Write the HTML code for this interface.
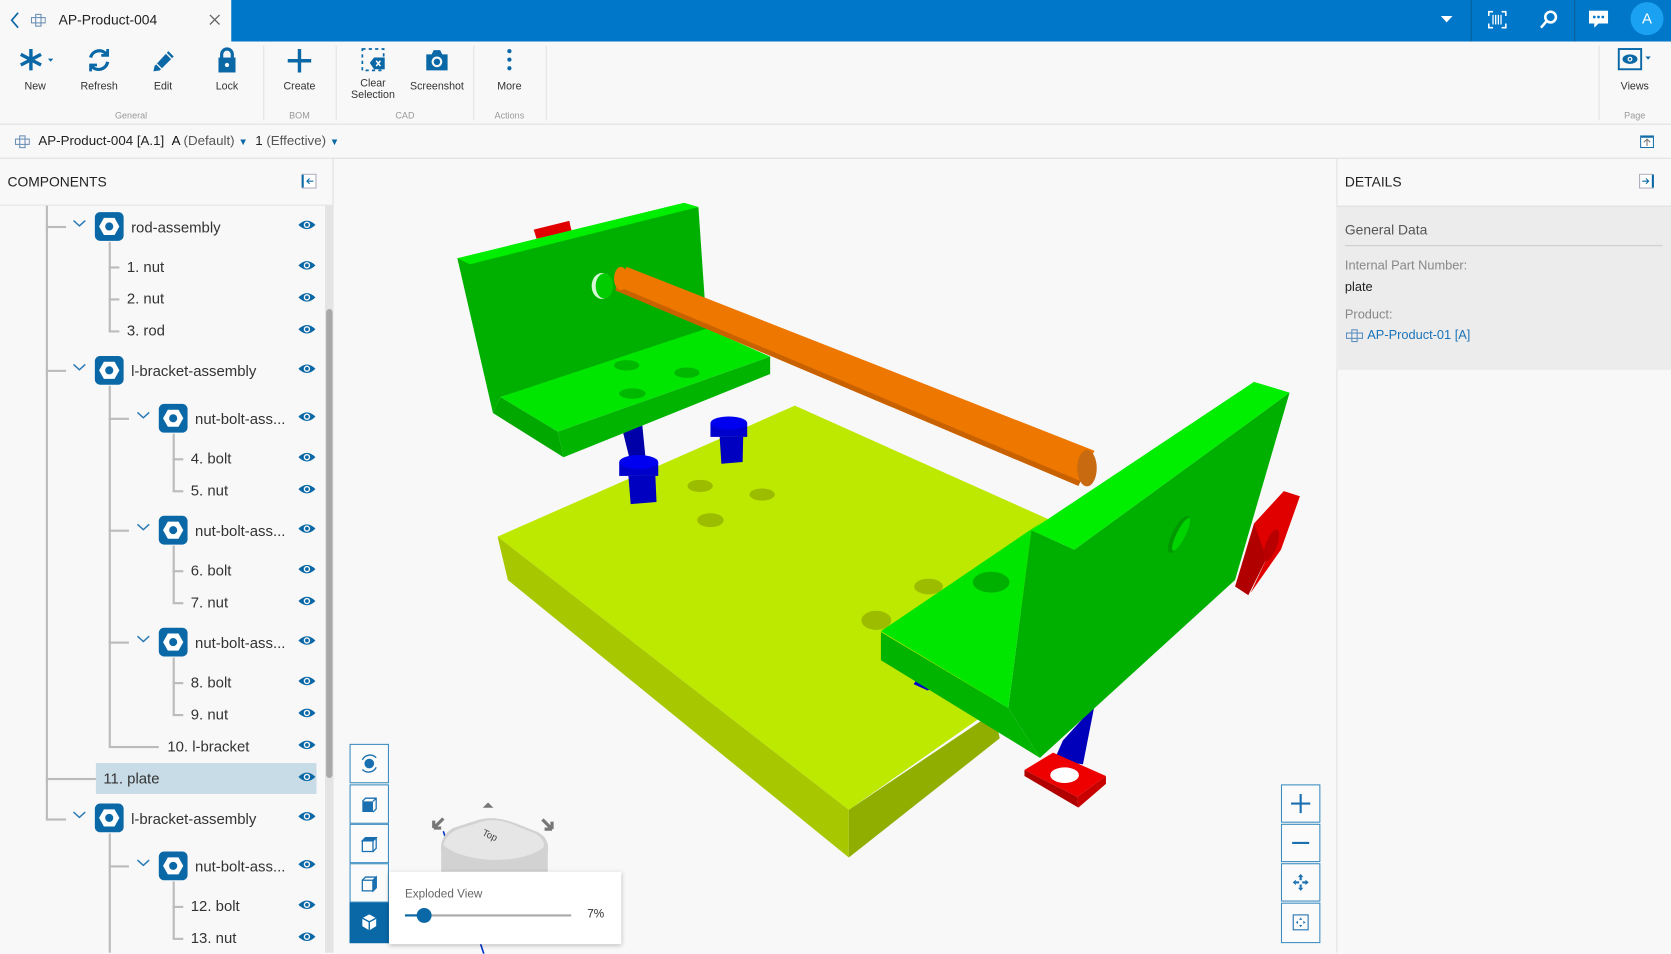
<!DOCTYPE html>
<html><head><meta charset="utf-8">
<style>
*{box-sizing:border-box;margin:0;padding:0}
html,body{width:1671px;height:952px;overflow:hidden;background:#f8f8f8;font-family:"Liberation Sans",sans-serif;color:#333}
#w{position:absolute;left:0;top:0;width:1568px;height:894px;transform:scale(1.06569);transform-origin:0 0;background:#f8f8f8}
.a{position:absolute}
.hdr{left:0;top:0;width:1568px;height:39px;background:#0077c8}
.tab{left:0;top:0;width:217px;height:39px;background:#f8f8f8}
.tb{top:39px;left:0;width:1568px;height:78px;background:#f8f8f8;border-bottom:1px solid #ddd}
.btn{position:absolute;top:44px;width:60px;text-align:center;font-size:10px;color:#333}
.btn svg{display:block;margin:0 auto 6px auto}
.grp{position:absolute;top:103px;font-size:8.5px;color:#999;text-align:center}
.sep{position:absolute;top:43px;width:1px;height:70px;background:#e2e2e2}
.row{position:absolute;font-size:14px;color:#333;white-space:nowrap}
.ln{position:absolute;background:#bbb}
.vb{position:absolute;left:328px;width:37px;height:37px;border:1px solid #3a8cc0;background:#fbfbfb}
.zb{position:absolute;left:1202px;width:37px;height:36px;border:1px solid #3a8cc0;background:#fbfbfb}
</style></head><body><div id="w">
<div class="a hdr"></div>
<div class="a tab"></div>
<svg class="a" style="left:8px;top:11px" width="12" height="16"><path d="M9 1 L3 8 L9 15" stroke="#0a68a6" stroke-width="1.6" fill="none"/></svg>
<svg class="a" style="left:29px;top:12px" width="14" height="14" fill="none" stroke="#6a8fb5" stroke-width="1"><rect x="4.5" y="1.5" width="5" height="11"/><rect x="0.5" y="4.5" width="13" height="5"/></svg>
<div class="a" style="left:55px;top:11px;font-size:13px;color:#222">AP-Product-004</div>
<svg class="a" style="left:196px;top:13px" width="11" height="11"><path d="M1 1L10 10M10 1L1 10" stroke="#666" stroke-width="1.2"/></svg>
<svg class="a" style="left:1352px;top:15px" width="11" height="7"><path d="M0 0H11L5.5 6Z" fill="#fff"/></svg>
<div class="a" style="left:1380px;top:0;width:1px;height:39px;background:#0a5f9c"></div>
<div class="a" style="left:1477px;top:0;width:1px;height:39px;background:#0a5f9c"></div>
<svg class="a" style="left:1396px;top:10px" width="18" height="17" fill="none" stroke="#fff" stroke-width="1.5"><path d="M1 5V1H5M13 1H17V5M17 12V16H13M5 16H1V12"/><path d="M5 4V13M7.5 4V13M10 4V13M12.5 4V13" stroke-width="1.2"/></svg>
<svg class="a" style="left:1444px;top:9px" width="18" height="19" fill="none" stroke="#fff" stroke-width="2.4"><circle cx="11" cy="7" r="5"/><path d="M7.5 10.5L2 17"/></svg>
<svg class="a" style="left:1491px;top:10px" width="18" height="17"><path d="M0 0H18V12H9L5 16V12H0Z" fill="#fff"/><circle cx="5" cy="6" r="1.3" fill="#0077c8"/><circle cx="9" cy="6" r="1.3" fill="#0077c8"/><circle cx="13" cy="6" r="1.3" fill="#0077c8"/></svg>
<div class="a" style="left:1530px;top:2px;width:31px;height:31px;border-radius:50%;background:#1ba1f2;color:#fff;font-size:14px;text-align:center;line-height:31px">A</div>
<div class="a tb"></div>
<div class="btn" style="left:3px"><svg width="34" height="26"><g stroke="#0a68a6" stroke-width="3.2"><path d="M13 2V22M3.5 7L22.5 17M22.5 7L3.5 17"/></g><path d="M29 11H34L31.5 14Z" fill="#0a68a6"/></svg>New</div>
<div class="btn" style="left:63px"><svg width="24" height="26" fill="none" stroke="#0a68a6" stroke-width="3"><path d="M4 10A8.5 8.5 0 0 1 19 7"/><path d="M20 14A8.5 8.5 0 0 1 5 18"/><path d="M20 2V8H14" stroke-width="2.6"/><path d="M4 23V17H10" stroke-width="2.6"/></svg>Refresh</div>
<div class="btn" style="left:123px"><svg width="24" height="26"><path d="M4 18L17 4L22 9L9 22L3 23Z" fill="#0a68a6"/><path d="M6 16L11 21M15 6L20 11" stroke="#f8f8f8" stroke-width="1.3"/></svg>Edit</div>
<div class="btn" style="left:183px"><svg width="22" height="26"><path d="M6 11V7A5 5 0 0 1 16 7V11" stroke="#0a68a6" stroke-width="3" fill="none"/><rect x="3" y="10" width="16" height="14" fill="#0a68a6"/><circle cx="11" cy="17" r="2" fill="#f8f8f8"/></svg>Lock</div>
<div class="sep" style="left:247px"></div>
<div class="btn" style="left:251px"><svg width="26" height="26"><path d="M13 2V24M2 13H24" stroke="#0a68a6" stroke-width="3.2"/></svg>Create</div>
<div class="sep" style="left:315px"></div>
<div class="btn" style="left:320px;line-height:11px"><svg width="24" height="26" style="margin-bottom:3px"><path d="M2 2H22V22H2Z" stroke="#0a68a6" stroke-width="1.6" stroke-dasharray="3 3" fill="none"/><path d="M9 15L13 10H23V21H13Z" fill="#0a68a6"/><path d="M15 13L19 18M19 13L15 18" stroke="#fff" stroke-width="1.4"/></svg>Clear<br>Selection</div>
<div class="btn" style="left:380px"><svg width="24" height="26"><path d="M2 7H7L9 3H15L17 7H22V22H2Z" fill="#0a68a6"/><circle cx="12" cy="14" r="5" fill="#f8f8f8"/><circle cx="12" cy="14" r="3" fill="#0a68a6"/></svg>Screenshot</div>
<div class="sep" style="left:444px"></div>
<div class="btn" style="left:448px"><svg width="10" height="26"><circle cx="5" cy="4" r="2" fill="#0a68a6"/><circle cx="5" cy="12" r="2" fill="#0a68a6"/><circle cx="5" cy="20" r="2" fill="#0a68a6"/></svg>More</div>
<div class="sep" style="left:512px"></div>
<div class="grp" style="left:93px;width:60px">General</div>
<div class="grp" style="left:261px;width:40px">BOM</div>
<div class="grp" style="left:360px;width:40px">CAD</div>
<div class="grp" style="left:458px;width:40px">Actions</div>
<div class="sep" style="left:1500px"></div>
<div class="btn" style="left:1504px"><svg width="34" height="26"><rect x="2" y="2" width="21" height="19" fill="#f8f8f8" stroke="#0a68a6" stroke-width="1.8"/><ellipse cx="12.5" cy="11.5" rx="7" ry="4.5" fill="#0a68a6"/><circle cx="12.5" cy="11.5" r="2.3" fill="#f8f8f8"/><circle cx="12.5" cy="11.5" r="1.1" fill="#0a68a6"/><path d="M27 9H32L29.5 12Z" fill="#0a68a6"/></svg>Views</div>
<div class="grp" style="left:1514px;width:40px">Page</div>
<div class="a" style="left:0;top:117px;width:1568px;height:32px;background:#f8f8f8;border-bottom:1px solid #ddd"></div>
<svg class="a" style="left:14px;top:126px" width="14" height="14" fill="none" stroke="#6a8fb5" stroke-width="1"><rect x="4.5" y="1.5" width="5" height="11"/><rect x="0.5" y="4.5" width="13" height="5"/></svg>
<div class="a" style="left:36px;top:125px;font-size:12.5px;color:#222;white-space:nowrap">AP-Product-004 [A.1] &nbsp;<b style="font-weight:normal;color:#111">A</b> <span style="color:#555">(Default)</span> <span style="color:#0a68a6;font-size:9px">▼</span> &nbsp;1 <span style="color:#555">(Effective)</span> <span style="color:#0a68a6;font-size:9px">▼</span></div>
<svg class="a" style="left:1539px;top:127px" width="13" height="12"><rect x="0.5" y="0.5" width="12" height="11" fill="#fff" stroke="#0a68a6"/><path d="M6.5 10V4M3.5 6.5L6.5 3.5L9.5 6.5" stroke="#777" fill="none"/><path d="M1 1.5H12" stroke="#0a68a6" stroke-width="1.5"/></svg>
<div class="a" style="left:0;top:149px;width:313px;height:745px;background:#f8f8f8;border-right:1px solid #e0e0e0"></div>
<div class="a" style="left:0;top:192px;width:313px;height:1px;background:#e4e4e4"></div>
<div class="a" style="left:7px;top:163px;font-size:13px;color:#222">COMPONENTS</div>
<svg class="a" style="left:283px;top:163px" width="14" height="14"><rect x="0.5" y="0.5" width="13" height="13" fill="#fff" stroke="#aab"/><path d="M1 1V13" stroke="#0a68a6" stroke-width="2"/><path d="M11 7H5M7.5 4.5L5 7L7.5 9.5" stroke="#0a68a6" fill="none"/></svg>
<div class="a" style="left:305px;top:193px;width:8px;height:701px;background:#e4e4e4"></div>
<div class="a" style="left:306px;top:290px;width:6px;height:440px;background:#a9a9a9;border-radius:3px"></div>
<div class="a" style="left:90px;top:716px;width:207px;height:29px;background:#c8dce7"></div>
<div class="ln" style="left:43px;top:193px;width:1.5px;height:575px"></div>
<div class="ln" style="left:43px;top:212px;width:19px;height:1.5px"></div>
<div class="ln" style="left:43px;top:347px;width:19px;height:1.5px"></div>
<div class="ln" style="left:43px;top:730px;width:47px;height:1.5px"></div>
<div class="ln" style="left:43px;top:768px;width:19px;height:1.5px"></div>
<div class="ln" style="left:102px;top:227px;width:1.5px;height:84px"></div>
<div class="ln" style="left:102px;top:250px;width:10px;height:1.5px"></div>
<div class="ln" style="left:102px;top:280px;width:10px;height:1.5px"></div>
<div class="ln" style="left:102px;top:310px;width:10px;height:1.5px"></div>
<div class="ln" style="left:102px;top:362px;width:1.5px;height:338px"></div>
<div class="ln" style="left:102px;top:392px;width:19px;height:1.5px"></div>
<div class="ln" style="left:102px;top:497px;width:19px;height:1.5px"></div>
<div class="ln" style="left:102px;top:602px;width:19px;height:1.5px"></div>
<div class="ln" style="left:102px;top:700px;width:47px;height:1.5px"></div>
<div class="ln" style="left:102px;top:782px;width:1.5px;height:112px"></div>
<div class="ln" style="left:102px;top:812px;width:19px;height:1.5px"></div>
<div class="ln" style="left:162px;top:407px;width:1.5px;height:54px"></div>
<div class="ln" style="left:162px;top:430px;width:10px;height:1.5px"></div>
<div class="ln" style="left:162px;top:460px;width:10px;height:1.5px"></div>
<div class="ln" style="left:162px;top:512px;width:1.5px;height:54px"></div>
<div class="ln" style="left:162px;top:535px;width:10px;height:1.5px"></div>
<div class="ln" style="left:162px;top:565px;width:10px;height:1.5px"></div>
<div class="ln" style="left:162px;top:617px;width:1.5px;height:54px"></div>
<div class="ln" style="left:162px;top:640px;width:10px;height:1.5px"></div>
<div class="ln" style="left:162px;top:670px;width:10px;height:1.5px"></div>
<div class="ln" style="left:162px;top:827px;width:1.5px;height:54px"></div>
<div class="ln" style="left:162px;top:850px;width:10px;height:1.5px"></div>
<div class="ln" style="left:162px;top:880px;width:10px;height:1.5px"></div>
<svg width="0" height="0" style="position:absolute"><defs>
<g id="hx"><rect width="27" height="27" rx="5" fill="#0a68a6"/><path d="M8.5 5.5H18.5L23 13.5L18.5 21.5H8.5L4 13.5Z" fill="#fff"/><circle cx="13.5" cy="13.5" r="3.8" fill="#0a68a6"/></g>
<g id="ch"><path d="M1 1L6.5 6L12 1" stroke="#2a7ab5" stroke-width="1.4" fill="none"/></g>
<g id="ey"><path d="M0 6Q8 -2 16 6Q8 14 0 6Z" fill="#0a68a6"/><circle cx="8" cy="6" r="3" fill="#f8f8f8"/><circle cx="8" cy="6" r="1.7" fill="#0a68a6"/></g>
</defs></svg>
<svg class="a" style="left:0;top:193px" width="313" height="701">
<g transform="translate(68,13)"><use href="#ch"/></g><g transform="translate(89,6)"><use href="#hx"/></g>
<g transform="translate(68,148)"><use href="#ch"/></g><g transform="translate(89,141)"><use href="#hx"/></g>
<g transform="translate(128,193)"><use href="#ch"/></g><g transform="translate(149,186)"><use href="#hx"/></g>
<g transform="translate(128,298)"><use href="#ch"/></g><g transform="translate(149,291)"><use href="#hx"/></g>
<g transform="translate(128,403)"><use href="#ch"/></g><g transform="translate(149,396)"><use href="#hx"/></g>
<g transform="translate(68,568)"><use href="#ch"/></g><g transform="translate(89,561)"><use href="#hx"/></g>
<g transform="translate(128,613)"><use href="#ch"/></g><g transform="translate(149,606)"><use href="#hx"/></g>
<g transform="translate(280,12)"><use href="#ey"/></g>
<g transform="translate(280,50)"><use href="#ey"/></g>
<g transform="translate(280,80)"><use href="#ey"/></g>
<g transform="translate(280,110)"><use href="#ey"/></g>
<g transform="translate(280,147)"><use href="#ey"/></g>
<g transform="translate(280,192)"><use href="#ey"/></g>
<g transform="translate(280,230)"><use href="#ey"/></g>
<g transform="translate(280,260)"><use href="#ey"/></g>
<g transform="translate(280,297)"><use href="#ey"/></g>
<g transform="translate(280,335)"><use href="#ey"/></g>
<g transform="translate(280,365)"><use href="#ey"/></g>
<g transform="translate(280,402)"><use href="#ey"/></g>
<g transform="translate(280,440)"><use href="#ey"/></g>
<g transform="translate(280,470)"><use href="#ey"/></g>
<g transform="translate(280,500)"><use href="#ey"/></g>
<g transform="translate(280,530)"><use href="#ey"/></g>
<g transform="translate(280,567)"><use href="#ey"/></g>
<g transform="translate(280,612)"><use href="#ey"/></g>
<g transform="translate(280,650)"><use href="#ey"/></g>
<g transform="translate(280,680)"><use href="#ey"/></g>
</svg>
<div class="row" style="left:123px;top:205px">rod-assembly</div>
<div class="row" style="left:119px;top:242px">1. nut</div>
<div class="row" style="left:119px;top:272px">2. nut</div>
<div class="row" style="left:119px;top:302px">3. rod</div>
<div class="row" style="left:123px;top:340px">l-bracket-assembly</div>
<div class="row" style="left:183px;top:385px">nut-bolt-ass...</div>
<div class="row" style="left:179px;top:422px">4. bolt</div>
<div class="row" style="left:179px;top:452px">5. nut</div>
<div class="row" style="left:183px;top:490px">nut-bolt-ass...</div>
<div class="row" style="left:179px;top:527px">6. bolt</div>
<div class="row" style="left:179px;top:557px">7. nut</div>
<div class="row" style="left:183px;top:595px">nut-bolt-ass...</div>
<div class="row" style="left:179px;top:632px">8. bolt</div>
<div class="row" style="left:179px;top:662px">9. nut</div>
<div class="row" style="left:157px;top:692px">10. l-bracket</div>
<div class="row" style="left:97px;top:722px">11. plate</div>
<div class="row" style="left:123px;top:760px">l-bracket-assembly</div>
<div class="row" style="left:183px;top:805px">nut-bolt-ass...</div>
<div class="row" style="left:179px;top:842px">12. bolt</div>
<div class="row" style="left:179px;top:872px">13. nut</div>
<div class="a" style="left:1254px;top:149px;width:314px;height:745px;background:#f8f8f8;border-left:1px solid #e0e0e0"></div>
<div class="a" style="left:1254px;top:193px;width:314px;height:154px;background:#ececec;border-top:1px solid #e0e0e0"></div>
<div class="a" style="left:1262px;top:163px;font-size:13px;color:#222">DETAILS</div>
<svg class="a" style="left:1538px;top:163px" width="14" height="14"><rect x="0.5" y="0.5" width="13" height="13" fill="#fff" stroke="#aab"/><path d="M13 1V13" stroke="#0a68a6" stroke-width="2"/><path d="M3 7H9M6.5 4.5L9 7L6.5 9.5" stroke="#0a68a6" fill="none"/></svg>
<div class="a" style="left:1262px;top:208px;font-size:13px;color:#555">General Data</div>
<div class="a" style="left:1262px;top:230px;width:298px;height:1px;background:#ccc"></div>
<div class="a" style="left:1262px;top:242px;font-size:12px;color:#888">Internal Part Number:</div>
<div class="a" style="left:1262px;top:262px;font-size:12px;color:#222">plate</div>
<div class="a" style="left:1262px;top:288px;font-size:12px;color:#888">Product:</div>
<svg class="a" style="left:1263px;top:308px" width="16" height="14" fill="none" stroke="#5a8fc0" stroke-width="1"><rect x="5.5" y="1.5" width="5" height="11"/><rect x="0.5" y="4.5" width="15" height="5"/></svg>
<div class="a" style="left:1283px;top:307px;font-size:12px;color:#1a73b8">AP-Product-01 [A]</div>
<svg class="a" style="left:412.9px;top:178.3px" width="844.5" height="638.1" viewBox="0 0 1568 1568" preserveAspectRatio="none">
<polygon points="100,800 618,498 1060,760 960,1200 712,1430" fill="#bde800"/>
<polygon points="100,800 712,1430 712,1540 118,900" fill="#a7c700"/>
<polygon points="712,1430 965,1205 975,1265 712,1540" fill="#8fae00"/>
<g fill="#9cbc00"><ellipse cx="453" cy="683" rx="22" ry="14"/><ellipse cx="561" cy="703" rx="22" ry="14"/><ellipse cx="471" cy="762" rx="23" ry="16"/><ellipse cx="851" cy="915" rx="25" ry="18"/><ellipse cx="760" cy="993" rx="26" ry="22"/></g>
<polygon points="315,540 352,540 358,620 330,620" fill="#0000a8"/>
<rect x="312" y="628" width="68" height="32" fill="#0000cc"/><ellipse cx="346" cy="628" rx="34" ry="16" fill="#0000f0"/>
<polygon points="328,660 375,660 377,720 332,725" fill="#0000c0"/>
<rect x="471" y="538" width="64" height="32" fill="#0000cc"/><ellipse cx="503" cy="538" rx="32" ry="15" fill="#0000f0"/>
<polygon points="487,570 528,570 527,628 490,632" fill="#0000c0"/>
<polygon points="163,92 225,72 229,95 168,113" fill="#e00000"/>
<polygon points="30,158 450,40 465,330 105,478 92,515" fill="#00b000"/>
<polygon points="30,158 425,30 450,40 52,172" fill="#00ee00"/>
<polygon points="105,478 465,320 575,385 205,558" fill="#00e600"/>
<polygon points="205,558 575,385 575,425 215,617" fill="#00b400"/>
<polygon points="92,515 105,478 205,558 215,617" fill="#00a800"/>
<g fill="#00b800"><ellipse cx="325" cy="405" rx="22" ry="12"/><ellipse cx="430" cy="422" rx="22" ry="12"/><ellipse cx="335" cy="470" rx="23" ry="12"/></g>
<ellipse cx="282" cy="222" rx="18" ry="30" fill="#d8f8d8"/><ellipse cx="286" cy="222" rx="15" ry="29" fill="#00cc00"/>
<polygon points="325,178 1140,602 1112,683 305,232" fill="#ee7700"/>
<polygon points="305,232 1112,683 1116,672 308,222" fill="#c86200"/>
<ellipse cx="315" cy="205" rx="12" ry="27" fill="#ee7700"/>
<ellipse cx="1127" cy="642" rx="17" ry="42" fill="#c86a10"/>
<polygon points="1385,915 1418,770 1470,695 1440,850 1408,935" fill="#b00000"/>
<polygon points="1418,770 1470,695 1498,707 1465,830 1412,930 1440,850" fill="#e00000"/>
<ellipse cx="1448" cy="820" rx="10" ry="38" fill="#b80000" transform="rotate(15 1448 820)"/>
<polygon points="1140,1190 1120,1325 1070,1315 1085,1270" fill="#0000bb"/>
<polygon points="830,1130 860,1140 850,1155 825,1140" fill="#0000cc"/>
<polygon points="1030,785 1105,830 1480,468 1385,900 1045,1310 990,1195" fill="#00b000"/>
<polygon points="1030,785 1418,443 1480,468 1105,830" fill="#00ee00"/>
<polygon points="768,1018 1050,765 1030,785 990,1195" fill="#00e600"/>
<polygon points="768,1020 990,1195 1045,1310 768,1085" fill="#00b400"/>
<ellipse cx="960" cy="905" rx="32" ry="24" fill="#00b000"/>
<ellipse cx="1287" cy="795" rx="12" ry="45" fill="#009a00" transform="rotate(20 1287 795)"/>
<ellipse cx="1291" cy="795" rx="8" ry="40" fill="#00d400" transform="rotate(20 1291 795)"/>
<polygon points="1018,1338 1068,1298 1160,1352 1110,1400" fill="#ee0000"/>
<polygon points="1018,1338 1110,1400 1112,1425 1018,1352" fill="#b00000"/>
<polygon points="1110,1400 1160,1352 1160,1370 1112,1425" fill="#c80000"/>
<ellipse cx="1088" cy="1350" rx="25" ry="18" fill="#fff"/>
</svg>
<svg class="a" style="left:390px;top:745px" width="160" height="150">
<path d="M26 35L64 150" stroke="#0033cc" stroke-width="1.5"/>
<path d="M73 13L68 8L63 13Z" fill="#777"/>
<path d="M17 32L26 23M17 32V25M17 32H24" stroke="#777" stroke-width="3" fill="none"/>
<path d="M128 33L119 24M128 33V26M128 33H121" stroke="#777" stroke-width="3" fill="none"/>
<path d="M24 55Q22 40 35 32L60 24Q75 20 95 28L115 36Q126 42 124 55V80H24Z" fill="#d2d2d2"/>
<path d="M26 48Q28 38 40 33L62 26Q75 22 92 29L112 37Q122 43 120 50Q105 62 72 62Q40 60 26 48Z" fill="#e6e6e6"/>
<text x="62" y="42" font-size="9" fill="#444" transform="rotate(25 70 40)" font-family="Liberation Sans">Top</text>
</svg>
<div class="vb" style="top:698px"><svg width="35" height="35"><circle cx="17.5" cy="17.5" r="4.5" fill="#1a6fb0"/><path d="M11 14A8 8 0 0 1 24 12M24 21A8 8 0 0 1 11 23" stroke="#1a6fb0" stroke-width="1.3" fill="none"/></svg></div>
<div class="vb" style="top:736px"><svg width="35" height="35"><path d="M11 15H21V25H11Z" fill="#1a6fb0"/><path d="M11 15L14 12H24V22L21 25M21 15L24 12" stroke="#1a6fb0" stroke-width="1.2" fill="none"/></svg></div>
<div class="vb" style="top:773px"><svg width="35" height="35" fill="none" stroke="#1a6fb0" stroke-width="1.2"><path d="M11 15H21V25H11Z"/><path d="M11 15L14 12H24V22L21 25M21 15L24 12"/><path d="M14 12H24L21 15H11Z" fill="#1a6fb0"/></svg></div>
<div class="vb" style="top:810px"><svg width="35" height="35" fill="none" stroke="#1a6fb0" stroke-width="1.2"><path d="M11 15H21V25H11Z"/><path d="M11 15L14 12H24V22L21 25M21 15L24 12"/><path d="M21 15L24 12V22L21 25Z" fill="#1a6fb0"/></svg></div>
<div class="vb" style="top:847px;height:38px;background:#0a68a6;border-color:#0a68a6"><svg width="35" height="36"><path d="M17.5 10L24 13.5V21L17.5 25L11 21V13.5Z" fill="#fff"/><path d="M11 13.5L17.5 17L24 13.5M17.5 17V25" stroke="#0a68a6" stroke-width="1.3" fill="none"/></svg></div>
<div class="a" style="left:365px;top:818px;width:218px;height:68px;background:#fff;box-shadow:0 1px 4px rgba(0,0,0,.25)"></div>
<div class="a" style="left:380px;top:833px;font-size:11px;color:#666">Exploded View</div>
<div class="a" style="left:380px;top:858px;width:156px;height:2px;background:#aaa"></div>
<div class="a" style="left:380px;top:858px;width:18px;height:2px;background:#0a68a6"></div>
<div class="a" style="left:391px;top:852px;width:14px;height:14px;border-radius:50%;background:#0a68a6"></div>
<div class="a" style="left:551px;top:852px;font-size:11px;color:#333">7%</div>
<div class="zb" style="top:736px"><svg width="35" height="34"><path d="M17.5 8V26M8.5 17H26.5" stroke="#1a6fb0" stroke-width="2"/></svg></div>
<div class="zb" style="top:773px"><svg width="35" height="34"><path d="M9.5 17H25.5" stroke="#1a6fb0" stroke-width="2"/></svg></div>
<div class="zb" style="top:810px"><svg width="35" height="34" fill="#1a6fb0"><path d="M17.5 9L15 12H20ZM17.5 25L15 22H20ZM10 17L13 14.5V19.5ZM25 17L22 14.5V19.5Z"/><rect x="16.5" y="12" width="2" height="3"/><rect x="16.5" y="19" width="2" height="3"/><rect x="13" y="16" width="3" height="2"/><rect x="19" y="16" width="3" height="2"/></svg></div>
<div class="zb" style="top:847px;height:38px"><svg width="35" height="36"><rect x="10.5" y="10.5" width="14" height="14" fill="none" stroke="#1a6fb0"/><path d="M17.5 13L16 15H19ZM17.5 22L16 20H19ZM13 17.5L15 16V19ZM22 17.5L20 16V19Z" fill="#1a6fb0"/></svg></div>
</div></body></html>
